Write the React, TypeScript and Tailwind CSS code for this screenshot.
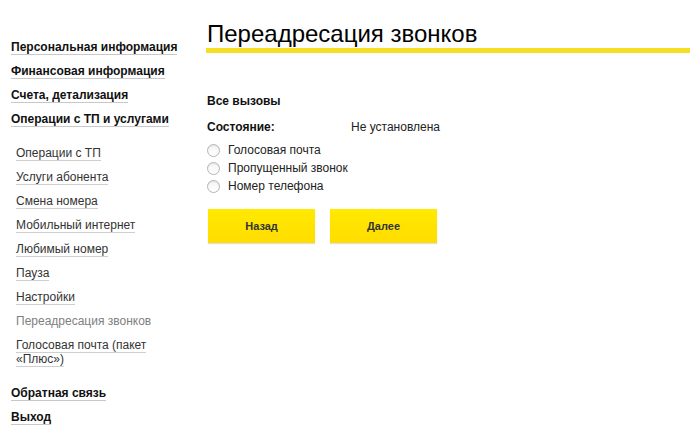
import React from "react";

const topItems1 = [
  "Персональная информация",
  "Финансовая информация",
  "Счета, детализация",
  "Операции с ТП и услугами",
];

const subItems = [
  "Операции с ТП",
  "Услуги абонента",
  "Смена номера",
  "Мобильный интернет",
  "Любимый номер",
  "Пауза",
  "Настройки",
];

function Radio({ label }: { label: string }) {
  return (
    <label className="flex items-center h-[18px] gap-[8px]">
      <span className="w-[13px] h-[13px] rounded-full border border-[#b5b5b5] bg-gradient-to-b from-[#f4f4f4] to-white shadow-[inset_0_1px_1px_rgba(0,0,0,0.08)]" />
      <span className="text-[12px] leading-[14px] text-[#222]">{label}</span>
    </label>
  );
}

export default function App() {
  return (
    <div
      className="w-[690px] h-[429px] bg-white flex overflow-hidden"
      style={{ fontFamily: '"Liberation Sans", Arial, sans-serif' }}
    >
      <nav className="w-[206px] shrink-0 pl-[11px] pr-[25px] pt-[40px]">
        <ul>
          {topItems1.map((t) => (
            <li key={t} className="mb-[10px] text-[12px] leading-[14px] font-bold text-[#111]">
              <a className="border-b border-[#c8c8c8]">{t}</a>
            </li>
          ))}
        </ul>
        <ul className="pl-[5px] mt-[20px]">
          {subItems.map((t) => (
            <li key={t} className="mb-[10px] text-[12px] leading-[14px] text-[#333]">
              <a className="border-b border-[#cfcfcf]">{t}</a>
            </li>
          ))}
          <li className="mb-[10px] text-[12px] leading-[14px] text-[#808080]">
            Переадресация звонков
          </li>
          <li className="mb-[10px] text-[12px] leading-[14px] text-[#333]">
            <a className="border-b border-[#cfcfcf]">Голосовая почта (пакет «Плюс»)</a>
          </li>
        </ul>
        <ul className="mt-[20px]">
          {["Обратная связь", "Выход"].map((t) => (
            <li key={t} className="mb-[10px] text-[12px] leading-[14px] font-bold text-[#111]">
              <a className="border-b border-[#c8c8c8]">{t}</a>
            </li>
          ))}
        </ul>
      </nav>
      <main className="flex-1 pt-[20px]">
        <h1 className="text-[24px] leading-[27px] text-black pl-[1px] pb-[1px] border-b-[5px] border-[#f6df22]">
          Переадресация звонков
        </h1>
        <div className="pl-[1px]">
          <div className="mt-[41px] text-[12px] leading-[14px] font-bold text-[#111]">
            Все вызовы
          </div>
          <div className="mt-[12px] flex text-[12px] leading-[14px]">
            <span className="w-[144px] font-bold text-[#111]">Состояние:</span>
            <span className="text-[#222]">Не установлена</span>
          </div>
          <div className="mt-[7px] flex flex-col">
            <Radio label="Голосовая почта" />
            <Radio label="Пропущенный звонок" />
            <Radio label="Номер телефона" />
          </div>
          <div className="mt-[14px] flex gap-[15px] pl-[1px]">
            <button className="w-[107px] h-[34px] bg-gradient-to-b from-[#ffea00] to-[#ffdc00] shadow-[0_1px_1px_rgba(0,0,0,0.12)] text-[11px] font-bold text-[#333]">
              Назад
            </button>
            <button className="w-[107px] h-[34px] bg-gradient-to-b from-[#ffea00] to-[#ffdc00] shadow-[0_1px_1px_rgba(0,0,0,0.12)] text-[11px] font-bold text-[#333]">
              Далее
            </button>
          </div>
        </div>
      </main>
    </div>
  );
}
